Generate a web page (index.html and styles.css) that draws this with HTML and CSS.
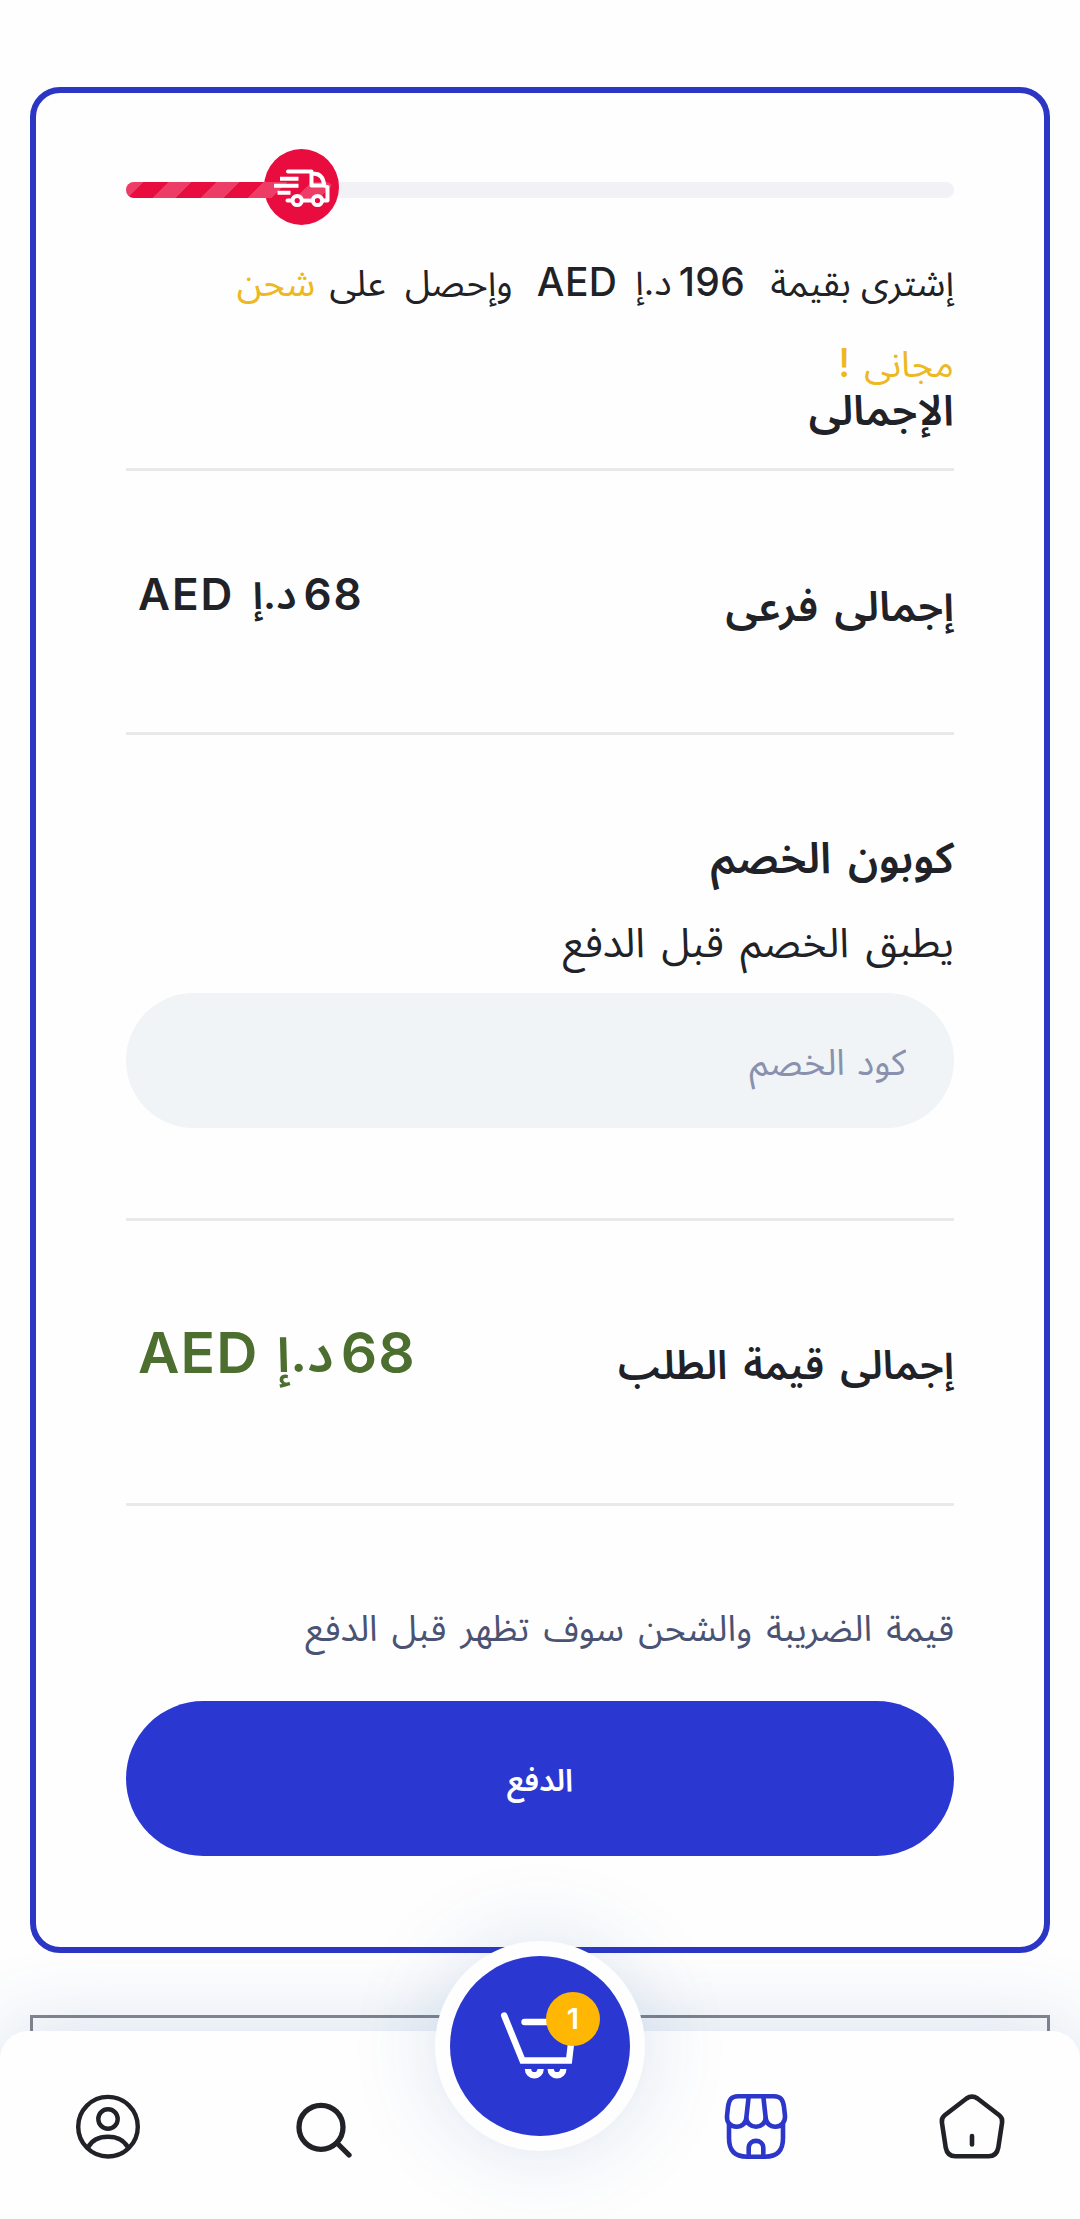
FILE: index.html
```
<!DOCTYPE html>
<html lang="ar" dir="rtl">
<head>
<meta charset="utf-8">
<title>سلة التسوق</title>
<link rel="stylesheet" href="styles.css">
</head>
<body>
<main class="page">
  <section class="summary">
    <div class="progress">
      <div class="progress-fill">
        <span class="progress-marker"></span>
        <span class="progress-stripes"></span>
        <svg class="progress-truck" viewBox="0 0 75 75" fill="none" stroke="#fff" stroke-width="4" stroke-linecap="round" stroke-linejoin="round">
          <path d="M24 21.5H47.5V35.5H60M50 23.7C56 23.5 59.5 28 60.3 35.5L63.5 37V50.5H60M38.2 50.5H48.3M23.5 50.5H28"/>
          <path d="M18 28.8H32.5M12 35.8H32.5M15.5 42.8H24.5" stroke-linecap="square"/>
          <circle cx="33.2" cy="50.5" r="4.6"/>
          <circle cx="53.5" cy="50.5" r="4.6"/>
        </svg>
      </div>
    </div>

    <p class="note">إشترى بقيمة <span class="note-price" dir="rtl"><span class="amount">196</span><span class="currency">د.إ</span><span class="code">AED</span></span> <span class="note-get">وإحصل على</span> <span class="free">شحن<br>مجانى <b>!</b></span></p>

    <h2 class="title">الإجمالى</h2>

    <div class="row">
      <h3 class="label">إجمالى فرعى</h3>
      <div class="price"><span class="amount">68</span><span class="currency">د.إ</span><span class="code">AED</span></div>
    </div>

    <div class="coupon">
      <h3 class="coupon-title">كوبون الخصم</h3>
      <p class="coupon-text">يطبق الخصم قبل الدفع</p>
      <input class="coupon-input" type="text" placeholder="كود الخصم">
    </div>

    <div class="row row-total">
      <h3 class="label">إجمالى قيمة الطلب</h3>
      <div class="price"><span class="amount">68</span><span class="currency">د.إ</span><span class="code">AED</span></div>
    </div>

    <p class="tax">قيمة الضريبة والشحن سوف تظهر قبل الدفع</p>
    <button class="checkout" type="button">الدفع</button>
  </section>
  <section class="next-box"></section>
</main>

<nav class="tabbar">
  <a class="tab">
    <svg viewBox="0 0 80 80" fill="none" stroke="#212227" stroke-width="4.6" stroke-linecap="round" stroke-linejoin="round">
      <path d="M34.5 11.5Q40 7.600 45.500 11.500L67.300 28.300Q70.700 31 70.100 35.500L66.300 60.500Q64.700 69.300 56.500 69.300H23.500Q15.300 69.300 13.700 60.500L9.900 35.500Q9.300 31 12.700 28.300Z"/>
      <path d="M40 49V57.500"/>
    </svg>
  </a>
  <a class="tab">
    <svg viewBox="0 0 80 80" fill="none" stroke="#2c36c9" stroke-width="4.6" stroke-linecap="round" stroke-linejoin="round">
      <path d="M22 9.300H58C65 9.300 67 13 68 20L69 29C69.500 35 65 39.700 59.500 39.700C54 39.700 50 36 49.700 31C49.500 36 45 39.700 40 39.700S30.300 36 30.300 31C30 36 26 39.700 20.500 39.700C14 39.700 10.500 35 11 29L12 20C13 13 15 9.300 22 9.300Z"/>
      <path d="M32.700 9.300L30.300 31M47.300 9.300L49.700 31"/>
      <path d="M13 37V51C13 64 19 69.700 31 69.700H49C61 69.700 67 64 67 51V37"/>
      <path d="M32.700 69V61C32.700 51.500 47.300 51.500 47.300 61V69"/>
    </svg>
  </a>
  <a class="cart">
    <span class="cart-disc">
      <svg viewBox="0 0 180 180" fill="none" stroke="#fff" stroke-width="6.400" stroke-linecap="round" stroke-linejoin="miter">
        <path d="M54.200 59.500L72.500 104.500H119L123.500 66H74.500"/>
        <path d="M78 113a6.300 6.300 0 0 0 12.600 0M100.700 113a6.300 6.300 0 0 0 12.600 0" stroke-linecap="butt"/>
      </svg>
    </span>
    <span class="badge">1</span>
  </a>
  <a class="tab">
    <svg viewBox="0 0 80 80" fill="none" stroke="#212227" stroke-width="5.300" stroke-linecap="round">
      <circle cx="37" cy="40.300" r="22"/>
      <path d="M54 57L65 68"/>
    </svg>
  </a>
  <a class="tab">
    <svg viewBox="0 0 80 80" fill="none" stroke="#212227" stroke-width="4.400" stroke-linecap="round">
      <circle cx="40" cy="39.700" r="29.800"/>
      <circle cx="40" cy="32" r="9.700"/>
      <path d="M20 60.500C24 52.500 32 49.700 40 49.700S56 52.500 60 60.500"/>
    </svg>
  </a>
</nav>
</body>
</html>
```
FILE: styles.css
```
* {
  box-sizing: border-box;
}

body {
  margin: 0;
  height: 2219px;
  overflow: hidden;
  background: #fefefe;
  color: #212227;
  font-family: Inter, "Noto Sans Arabic", "Noto Sans", "DejaVu Sans", sans-serif;
}

h2, h3, p {
  margin: 0;
}

.page {
  display: flex;
  flex-direction: column;
  height: 2219px;
  padding: 87px 30px 0;
}

.summary {
  height: 1866px;
  padding: 89px 90px 0;
  border: 6px solid #2c36c4;
  border-radius: 30px;
}

/* Free shipping progress */
.progress {
  direction: ltr;
  height: 16px;
  border-radius: 8px;
  background: #f1f1f6;
}

.progress-fill {
  position: relative;
  width: 25%;
  height: 16px;
  border-radius: 8px;
  background: #e90c3f;
}

.progress-marker {
  position: absolute;
  top: -33px;
  right: -6px;
  width: 75px;
  height: 76px;
  border-radius: 50%;
  background: #e90c3f;
}

.progress-stripes {
  position: absolute;
  inset: 0;
  border-radius: 8px;
  background: repeating-linear-gradient(135deg, rgba(255, 255, 255, .2) 0 12.7px, transparent 12.7px 29.7px, rgba(255, 255, 255, .2) 29.7px 33.94px);
}

.progress-truck {
  position: absolute;
  top: -32.500px;
  right: -6px;
  width: 75px;
  height: 75px;
}

.note {
  height: 160px;
  margin-top: 44px;
  font-size: 36.500px;
  line-height: 80px;
  white-space: nowrap;
}

.note-price {
  display: inline-flex;
  font-size: 39px;
  font-weight: 500;
  margin: 0 15px 0 14px;
}

.note-get {
  word-spacing: 9px;
}

.amount,
.code {
  letter-spacing: .045em;
}

.note-price .amount,
.note-price .code {
  letter-spacing: .01em;
}

.currency {
  font-size: .93em;
}

.note-price .currency {
  margin-right: 7px;
  font-weight: 400;
}

.note-price .code {
  margin-right: 18px;
}

.free {
  margin-right: 4px;
  color: #edb821;
  word-spacing: 4px;
}

.free b {
  font-size: 39px;
  font-weight: 500;
}

.title {
  margin-top: -17px;
  padding-bottom: 33px;
  border-bottom: 3px solid #e8e9eb;
  font-size: 42px;
  font-weight: 600;
  line-height: 50px;
}

.row {
  display: flex;
  justify-content: space-between;
  align-items: flex-start;
  height: 264px;
  padding: 93px 0 0 12px;
  border-bottom: 3px solid #e8e9eb;
}

.label {
  margin-top: 12px;
  font-size: 42px;
  font-weight: 600;
  line-height: 60px;
  word-spacing: 6px;
}

.price {
  display: flex;
  font-size: 44px;
  font-weight: 600;
  line-height: 60px;
}

.price .currency {
  margin-right: 7px;
}

.price .code {
  margin-right: 18px;
}

.coupon {
  height: 486px;
  padding-top: 92px;
  border-bottom: 3px solid #e8e9eb;
}

.coupon-title {
  font-size: 43px;
  font-weight: 600;
  line-height: 60px;
  word-spacing: 6px;
}

.coupon-text {
  margin-top: 25px;
  font-size: 41px;
  line-height: 60px;
  word-spacing: 5px;
}

.coupon-input {
  display: block;
  width: 100%;
  height: 135px;
  margin-top: 21px;
  padding: 2px 48px 0;
  border: 0;
  border-radius: 68px;
  background: #f0f4f6;
  font-family: inherit;
  font-size: 36px;
  word-spacing: 2px;
}

.coupon-input::placeholder {
  color: #8a91ae;
  opacity: 1;
}

.row-total {
  height: 285px;
  padding-top: 102px;
}

.row-total .label {
  font-size: 40px;
}

.row-total .price {
  color: #4c6e2e;
  font-size: 57px;
}

.row-total .amount,
.row-total .code {
  letter-spacing: .02em;
}

.tax {
  margin-top: 92px;
  color: #4b5374;
  font-size: 36px;
  line-height: 60px;
  word-spacing: 4px;
}

.checkout {
  display: block;
  width: 100%;
  height: 155px;
  margin-top: 43px;
  padding: 4px 0 0;
  border: 0;
  border-radius: 78px;
  background: #2a37d1;
  color: #fff;
  font-family: inherit;
  font-size: 31px;
  font-weight: 600;
}

.next-box {
  flex: 1;
  margin-top: 62px;
  border: 3px solid #83858b;
  border-bottom: 0;
}

/* Bottom navigation */
.tabbar {
  position: fixed;
  right: 0;
  bottom: 0;
  left: 0;
  display: grid;
  grid-template-columns: repeat(5, 1fr);
  justify-items: center;
  align-items: start;
  height: 188px;
  border-radius: 28px 28px 0 0;
  background: #fefefe;
  box-shadow: 0 0 85px rgba(43, 95, 165, .2);
}

.tab {
  padding-top: 56px;
}

.tab svg {
  display: block;
  width: 80px;
  height: 80px;
}

.cart {
  position: relative;
  width: 210px;
  height: 210px;
  margin-top: -90px;
  padding: 15px;
  border-radius: 50%;
  background: #fefefe;
  box-shadow: 0 0 85px rgba(43, 95, 165, .17);
}

.cart-disc {
  display: block;
  width: 180px;
  height: 180px;
  border-radius: 50%;
  background: #2a37d1;
}

.cart-disc svg {
  display: block;
}

.badge {
  position: absolute;
  top: 51px;
  left: 111px;
  width: 54px;
  height: 54px;
  border-radius: 50%;
  background: #ffb703;
  color: #fff;
  font-size: 29px;
  font-weight: 600;
  line-height: 54px;
  text-align: center;
}
```
